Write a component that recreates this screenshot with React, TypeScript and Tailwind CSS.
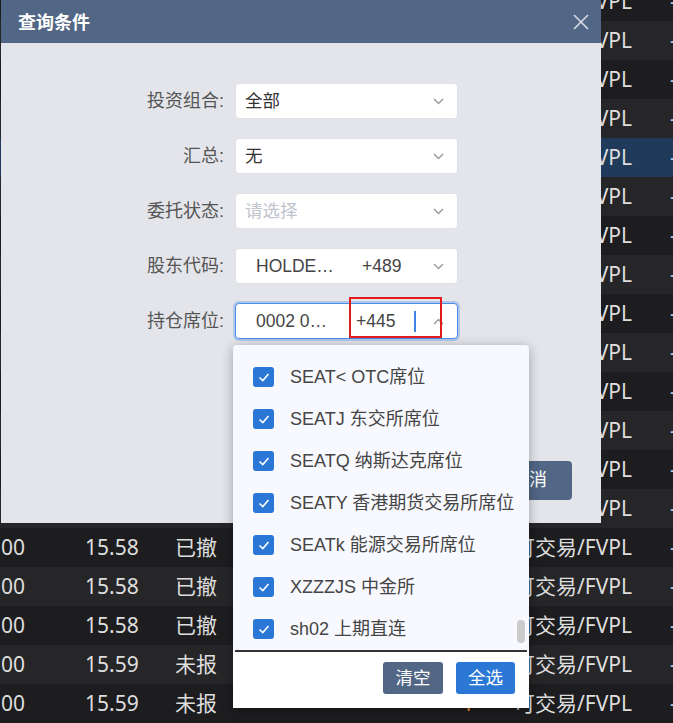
import React from "react"

const items = [
  "SEAT< OTC席位",
  "SEATJ 东交所席位",
  "SEATQ 纳斯达克席位",
  "SEATY 香港期货交易所席位",
  "SEATk 能源交易所席位",
  "XZZZJS 中金所",
  "sh02 上期直连",
]

const rows = Array.from({ length: 19 }, (_, i) => ({
  price: i >= 17 ? "15.59" : "15.58",
  status: i >= 17 ? "未报" : "已撤",
  dark: i % 2 === 0,
  active: i === 4,
}))

function Chevron({ up = false }: { up?: boolean }) {
  return (
    <svg width="11" height="7" viewBox="0 0 11 7" className="shrink-0">
      <polyline
        points={up ? "1,6 5.5,1.5 10,6" : "1,1 5.5,5.5 10,1"}
        fill="none"
        stroke="#9a9ca3"
        strokeWidth="1.5"
      />
    </svg>
  )
}

function Field({ label, children, focused = false }: { label: string; children: React.ReactNode; focused?: boolean }) {
  return (
    <div className="flex items-center h-[36px]">
      <div className="w-[224px] text-right text-[18px] text-[#555] pr-[1px]">{label}</div>
      <div
        className={
          focused
            ? "relative ml-[10px] w-[223px] h-[36px] bg-white rounded-[4px] border border-[#4a8eea] shadow-[0_0_0_2px_rgba(74,142,234,0.35)] flex items-center pr-[13px]"
            : "relative ml-[10px] w-[223px] h-[36px] bg-white rounded-[4px] border border-[#dfe1e6] flex items-center pr-[13px]"
        }
      >
        {children}
      </div>
    </div>
  )
}

export default function App() {
  return (
    <div className="relative w-[673px] h-[723px] overflow-hidden bg-[#1d1d1f] font-['Noto_Sans','Noto_Sans_CJK_SC',sans-serif]">
      {/* background table */}
      <div className="mt-[-18px]">
        {rows.map((r, i) => (
          <div
            key={i}
            className={
              r.active
                ? "flex items-center h-[39px] bg-[#1f3a5a] text-[21px] text-[#dedede] whitespace-nowrap"
                : r.dark
                ? "flex items-center h-[39px] bg-[#1d1d1f] text-[21px] text-[#dedede] whitespace-nowrap"
                : "flex items-center h-[39px] bg-[#262628] text-[21px] text-[#dedede] whitespace-nowrap"
            }
          >
            <span className="shrink-0 w-[85px] pl-[1px]">00</span>
            <span className="shrink-0 w-[90px]">{r.price}</span>
            <span className="shrink-0 w-[287px]">{r.status}</span>
            <span className="shrink-0 w-[52px] text-[#e8922c]">1</span>
            <span className="shrink-0 w-[156px]">可交易/FVPL</span>
            <span className="shrink-0 text-[#b8cde8]">-</span>
          </div>
        ))}
      </div>

      {/* modal */}
      <div className="absolute left-[1px] top-0 w-[600px] h-[523px] bg-[#e4e5ea] flex flex-col font-['Liberation_Sans','Noto_Sans_CJK_SC',sans-serif]">
        <div className="h-[43px] bg-[#526685] flex items-center justify-between pl-[17px] pr-[12px]">
          <span className="text-white text-[18px] font-bold font-['Noto_Sans_CJK_SC',sans-serif]">查询条件</span>
          <svg width="16" height="16" viewBox="0 0 16 16">
            <line x1="1" y1="1" x2="15" y2="15" stroke="#d3d8e0" strokeWidth="1.7" />
            <line x1="15" y1="1" x2="1" y2="15" stroke="#d3d8e0" strokeWidth="1.7" />
          </svg>
        </div>

        <div className="flex flex-col gap-[19px] pt-[40px]">
          <Field label="投资组合:">
            <span className="flex-1 pl-[9px] text-[17.5px] text-[#333]">全部</span>
            <Chevron />
          </Field>
          <Field label="汇总:">
            <span className="flex-1 pl-[9px] text-[17.5px] text-[#333]">无</span>
            <Chevron />
          </Field>
          <Field label="委托状态:">
            <span className="flex-1 pl-[9px] text-[17.5px] text-[#c0c4cc]">请选择</span>
            <Chevron />
          </Field>
          <Field label="股东代码:">
            <span className="pl-[20px] w-[126px] text-[17.5px] text-[#444]">HOLDE…</span>
            <span className="flex-1 text-[17.5px] text-[#444]">+489</span>
            <Chevron />
          </Field>
          <Field label="持仓席位:" focused>
            <span className="pl-[20px] w-[120px] text-[17.5px] text-[#444]">0002 0…</span>
            <span className="flex-1 text-[17.5px] text-[#444]">+445</span>
            <Chevron up />
            <span className="absolute left-[178px] top-[7px] w-[2px] h-[21px] bg-[#3d82e4]" />
            <span className="absolute left-[113px] top-[-7px] w-[93px] h-[41px] border-2 border-[#e41c1c]" />
          </Field>
        </div>

        <div className="flex justify-end gap-[10px] pr-[29px] mt-[122px]">
          <button className="w-[86px] h-[39px] rounded-[4px] bg-[#2a78d6] text-white text-[18px]">确定</button>
          <button className="w-[86px] h-[39px] rounded-[4px] bg-[#526685] text-white text-[18px]">取消</button>
        </div>
      </div>

      {/* dropdown */}
      <div className="absolute left-[233px] top-[345px] w-[296px] h-[363px] bg-[#f8f9fe] rounded-t-[4px] shadow-[0_2px_12px_rgba(0,0,0,0.3)] flex flex-col font-['Liberation_Sans','Noto_Sans_CJK_SC',sans-serif]">
        <div className="relative flex flex-col pt-[11px] h-[305px]">
          {items.map((t) => (
            <div key={t} className="flex items-center h-[42px] pl-[20px] gap-[16px]">
              <span className="w-[21px] h-[20px] rounded-[3px] bg-[#2a77d6] flex items-center justify-center">
                <svg width="14" height="14" viewBox="0 0 14 14">
                  <polyline points="2.5,7.5 5.8,10.5 11.5,4" fill="none" stroke="white" strokeWidth="1.6" />
                </svg>
              </span>
              <span className="text-[18px] text-[#454545] whitespace-nowrap">{t}</span>
            </div>
          ))}
          <span className="absolute left-[284px] top-[275px] w-[8px] h-[23px] rounded-full bg-[#cbcbcb]" />
        </div>
        <div className="mx-[2px] h-[2px] bg-[#333]" />
        <div className="flex-1 bg-white flex justify-end items-start gap-[13px] pt-[10px] pr-[14px]">
          <button className="w-[60px] h-[32px] rounded-[3px] bg-[#526685] text-white text-[17.5px]">清空</button>
          <button className="w-[59px] h-[32px] rounded-[3px] bg-[#2a77d6] text-white text-[17.5px]">全选</button>
        </div>
      </div>
    </div>
  )
}
